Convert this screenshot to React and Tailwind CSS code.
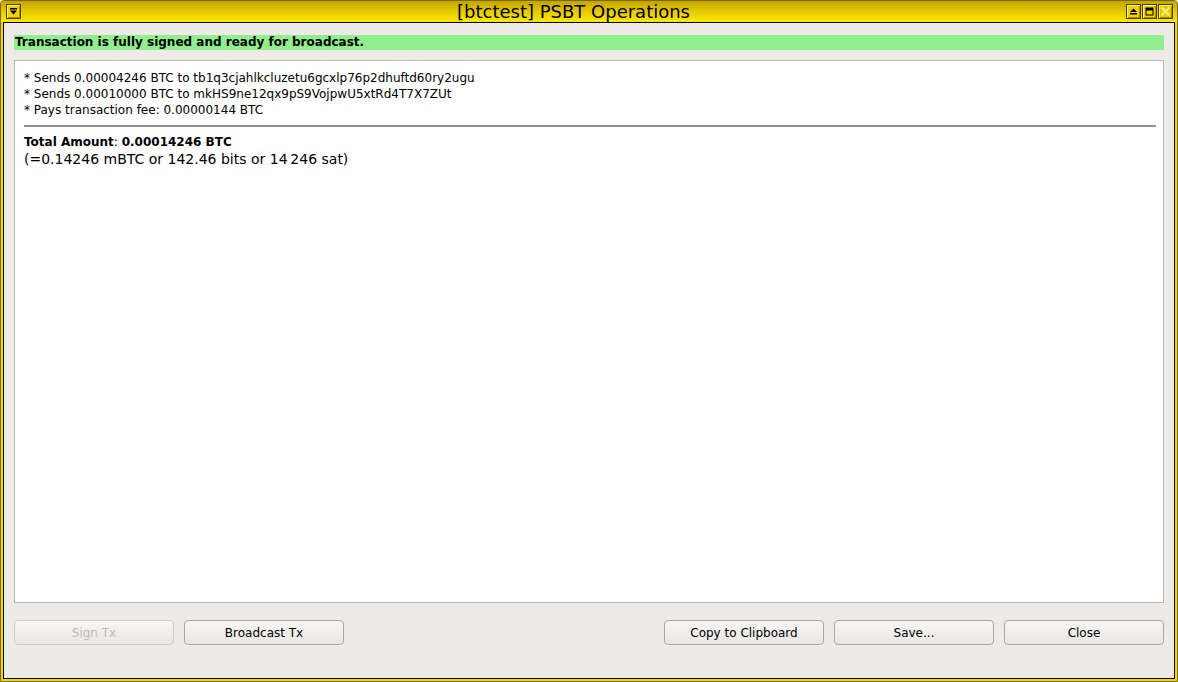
import React from "react";

const font = { fontFamily: '"DejaVu Sans", "Liberation Sans", sans-serif' };

function TBtn({ children, dim }) {
  return (
    <div className={`w-[15px] h-[15px] border border-[#4a3f00] flex items-center justify-center ${dim ? "bg-[#e6c800]" : "bg-[#f0d000]"} shadow-[inset_1px_1px_0_#fff27a,inset_-1px_-1px_0_#a88f00]`}>
      {children}
    </div>
  );
}

function Btn({ children, disabled }) {
  return (
    <button
      className={`w-[160px] h-[25px] rounded-[4px] border border-[#aaa6a1] bg-gradient-to-b from-[#f7f6f5] to-[#e9e7e4] text-[12px] flex items-center justify-center ${disabled ? "text-[#bdb9b5] border-[#cfccc8]" : "text-black"}`}
      style={font}
    >
      {children}
    </button>
  );
}

export default function App() {
  return (
    <div className="w-[1178px] h-[682px] flex flex-col bg-[#f2d700] border border-[#7a6800] rounded-t-[4px] overflow-hidden" style={font}>
      <div className="h-[21px] shrink-0 flex items-center pl-[5px] pr-[4px] bg-gradient-to-b from-[#c4a300] via-[#e6c900] to-[#fde800]">
        <TBtn>
          <svg width="9" height="9" viewBox="0 0 9 9">
            <rect x="1" y="1" width="7" height="1.5" fill="#000" />
            <path d="M1 3.5 H8 L4.5 7.5 Z" fill="#000" />
          </svg>
        </TBtn>
        <div className="flex-1 text-center text-[18px] leading-[21px] text-black">[btctest] PSBT Operations</div>
        <div className="flex gap-[1px]">
          <TBtn>
            <svg width="9" height="9" viewBox="0 0 9 9">
              <path d="M1 5 H8 L4.5 1.5 Z" fill="#000" />
              <rect x="1" y="6" width="7" height="1.5" fill="#000" />
            </svg>
          </TBtn>
          <TBtn>
            <svg width="9" height="9" viewBox="0 0 9 9">
              <rect x="1" y="1" width="7" height="7" fill="none" stroke="#000" strokeWidth="1" />
              <rect x="1" y="1" width="7" height="2.5" fill="#000" />
            </svg>
          </TBtn>
          <TBtn dim>
            <svg width="11" height="11" viewBox="0 0 11 11">
              <path d="M1.5 1.5 L9.5 9.5 M9.5 1.5 L1.5 9.5" stroke="#fff06a" strokeWidth="2" />
            </svg>
          </TBtn>
        </div>
      </div>
      <div className="flex-1 mx-[2px] mb-[2px] border border-black bg-[#eeebe7] flex flex-col pt-[12px] px-[10px] pb-[33px]">
        <div className="h-[15px] bg-[#90ee90] text-[12px] leading-[15px] font-bold text-black pl-[1px]">
          Transaction is fully signed and ready for broadcast.
        </div>
        <div className="mt-[10px] flex-1 bg-white border border-[#bcb8b3] pt-[9px] pl-[9px] pr-[7px] text-black">
          <div className="text-[12px] leading-[16px]">
            <div>* Sends 0.00004246 BTC to tb1q3cjahlkcluzetu6gcxlp76p2dhuftd60ry2ugu</div>
            <div>* Sends 0.00010000 BTC to mkHS9ne12qx9pS9VojpwU5xtRd4T7X7ZUt</div>
            <div>* Pays transaction fee: 0.00000144 BTC</div>
          </div>
          <div className="mt-[7px] h-[2px] bg-[#8f8f8f]" />
          <div className="mt-[7px] text-[12px] leading-[16px]">
            <b>Total Amount</b>: <b>0.00014246 BTC</b>
          </div>
          <div className="text-[14px] leading-[18px]">(=0.14246 mBTC or 142.46 bits or 14&#8239;246 sat)</div>
        </div>
        <div className="mt-[17px] flex items-center">
          <Btn disabled>Sign Tx</Btn>
          <div className="ml-[10px]">
            <Btn>Broadcast Tx</Btn>
          </div>
          <div className="flex-1" />
          <div className="flex gap-[10px]">
            <Btn>Copy to Clipboard</Btn>
            <Btn>Save...</Btn>
            <Btn>Close</Btn>
          </div>
        </div>
      </div>
    </div>
  );
}
